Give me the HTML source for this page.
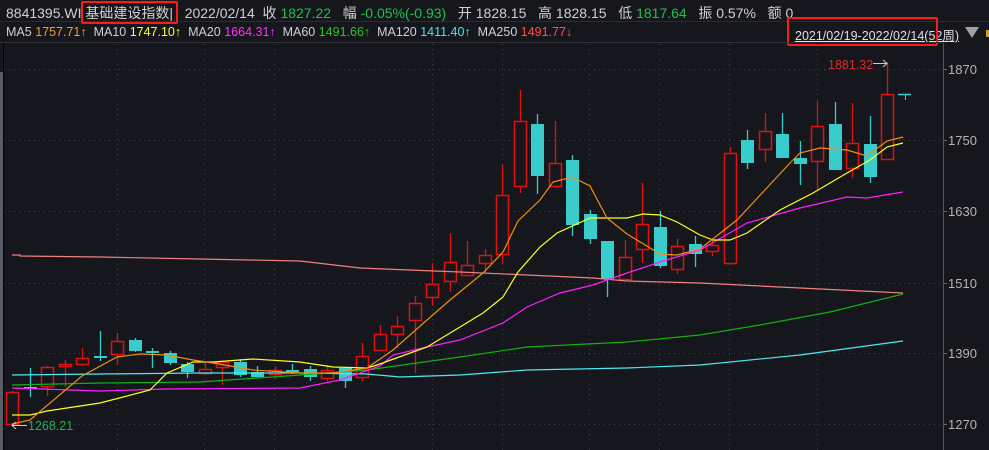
<!DOCTYPE html>
<html><head><meta charset="utf-8">
<style>
html,body{margin:0;padding:0;background:#15171c;overflow:hidden}
body{width:989px;height:450px;position:relative;font-family:"Liberation Sans","Noto Sans CJK SC",sans-serif;font-size:13px;color:#d0d0d0}
.row{position:absolute;left:6px;white-space:nowrap}
.g{color:#20c050}.o{color:#f0a030}.y{color:#ffff30}.m{color:#ff30ff}.gr{color:#30c030}.c{color:#50e0f0}.r{color:#ff5050}
.box{position:absolute;border:2px solid #ff1a1a;border-radius:2px}
</style></head><body>
<div class="row" style="top:3px;font-size:14px">8841395.WI 基础建设指数|&nbsp;&nbsp; 2022/02/14&nbsp; 收 <span class="g">1827.22</span>&nbsp;&nbsp; 幅 <span class="g">-0.05%(-0.93)</span>&nbsp;&nbsp; 开 1828.15&nbsp;&nbsp; 高 1828.15&nbsp;&nbsp; 低 <span class="g">1817.64</span>&nbsp;&nbsp; 振 0.57%&nbsp;&nbsp; 额 0</div>
<div style="position:absolute;left:0;top:21px;width:989px;height:1px;background:#2a2c32"></div>
<div class="row" style="top:25px;font-size:12.5px">MA5 <span class="o">1757.71↑</span>&nbsp; MA10 <span class="y">1747.10↑</span>&nbsp; MA20 <span class="m">1664.31↑</span>&nbsp; MA60 <span class="gr">1491.66↑</span>&nbsp; MA120 <span class="c">1411.40↑</span>&nbsp; MA250 <span class="r">1491.77↓</span></div>
<div style="position:absolute;left:795px;top:25px;font-size:12.5px;color:#e0e0e0;text-decoration:underline;white-space:nowrap">2021/02/19-2022/02/14(52周)</div>
<div style="position:absolute;left:965px;top:27px;width:0;height:0;border-left:7px solid transparent;border-right:7px solid transparent;border-top:11px solid #a0a0a0"></div>
<div style="position:absolute;left:986px;top:30px;width:3px;height:7px;background:#d0a020"></div>
<div class="box" style="left:81px;top:1px;width:93px;height:19px"></div>
<div class="box" style="left:787px;top:17px;width:147px;height:25px"></div>
<svg id="s" width="989" height="450" style="position:absolute;left:0;top:0" xmlns="http://www.w3.org/2000/svg"></svg>
<script>
var s=document.getElementById('s');var h='';
h+='<line x1="0" y1="42.5" x2="943" y2="42.5" stroke="#2e3036"/>';
h+='<rect x="0" y="72" width="3" height="378" fill="#5a5c66"/>';
h+='<line x1="3.5" y1="43" x2="3.5" y2="450" stroke="#000"/>';
var ys=[69,140,211,283,353,424],lb=[1870,1750,1630,1510,1390,1270];
ys.forEach(function(y,i){h+='<line x1="4" y1="'+(y+.5)+'" x2="943" y2="'+(y+.5)+'" stroke="#3c3e46" stroke-dasharray="1,4"/>';
h+='<line x1="943" y1="'+(y+.5)+'" x2="947" y2="'+(y+.5)+'" stroke="#666"/>';
h+='<text x="948" y="'+(y+5)+'" fill="#b4b4b8" font-size="13" font-family="Liberation Sans">'+lb[i]+'</text>';});
[117,204,274,432,502,589,659,729,817].forEach(function(x){h+='<line x1="'+(x+.5)+'" y1="44" x2="'+(x+.5)+'" y2="450" stroke="#3c3e46" stroke-dasharray="1,4"/>';});
h+='<line x1="943.5" y1="43" x2="943.5" y2="450" stroke="#55575e"/>';
var C=[[392,424,391,424,1],[387,389,368,397,0],[367,386,366,396,1],[364,366,360,387,1],[358,364,348,366,1],[356,358,331,361,0],[341,354,333,365,1],[340,351,338,352,0],[351,353,348,368,0],[353,363,351,365,0],[364,372,362,378,0],[369,373,362,375,1],[362,367,361,385,1],[362,375,359,377,0],[372,377,366,378,0],[370,374,366,379,1],[370,372,364,374,0],[369,377,366,381,0],[370,378,365,381,1],[368,381,367,388,0],[356,377,343,381,1],[334,350,325,350,1],[326,334,316,348,1],[303,320,296,373,1],[284,297,263,306,1],[262,281,233,292,1],[265,275,241,275,1],[255,263,249,272,1],[195,254,165,264,1],[121,186,90,193,1],[124,176,114,194,0],[163,186,121,188,1],[160,225,155,236,0],[214,239,210,244,0],[241,279,241,297,0],[257,279,240,279,1],[224,249,183,263,1],[227,266,211,268,0],[246,269,239,274,1],[244,254,236,267,0],[245,251,238,256,1],[153,263,147,263,1],[140,163,130,169,0],[131,149,113,162,1],[134,158,113,158,0],[158,164,141,185,0],[126,161,101,190,1],[124,170,102,170,0],[143,168,103,178,1],[144,177,116,183,0],[94,159,62,159,1]];
C.forEach(function(c,i){var x=Math.round(12+17.5*i);var col=c[4]?'#e01010':'#38cccc';
h+='<line x1="'+(x+.5)+'" y1="'+c[2]+'" x2="'+(x+.5)+'" y2="'+c[3]+'" stroke="'+col+'" stroke-width="1.3"/>';
var bh=Math.max(c[1]-c[0],2);
if(c[4])h+='<rect x="'+(x-5.5)+'" y="'+(c[0]+.5)+'" width="12" height="'+bh+'" fill="#15171c" stroke="'+col+'" stroke-width="1.5"/>';
else h+='<rect x="'+(x-6)+'" y="'+c[0]+'" width="13" height="'+bh+'" fill="'+col+'"/>';});
h+='<line x1="898" y1="94.5" x2="911" y2="94.5" stroke="#38cccc" stroke-width="1.5"/><line x1="905.5" y1="94" x2="905.5" y2="100" stroke="#38cccc"/>';
function pl(p,col,w){h+='<polyline points="'+p+'" fill="none" stroke="'+col+'" stroke-width="'+(w||1.2)+'"/>';}
pl('12,255 20,255 20,256 100,257 200,259 300,261 360,268 460,272 527,275 593,278 627,281 700,283 800,288 903,293','#f08080');
pl('12,375 100,374 200,373 300,373 367,374 400,377 460,375 527,370 627,368 700,365 800,355 903,341','#50e8f0');
pl('12,385 100,383 200,382 300,375 367,370 460,357 527,347 627,342 700,335 760,325 830,312 903,294','#10b010');
pl('12,388 100,391 167,389 300,388 340,380 380,366 393,355 427,347 460,340 503,323 527,307 560,293 593,285 627,273 660,262 700,250 747,223 800,208 847,197 867,198 903,192','#ff20ff');
pl('12,415 30,415 47,411 100,403 150,390 167,373 193,362 213,362 253,359 300,362 333,367 367,368 377,365 427,347 460,327 483,313 503,297 518,272 540,247 557,233 590,218 627,218 643,214 660,215 677,222 700,235 713,240 730,240 747,233 780,210 813,193 847,173 870,160 887,147 903,143','#ffff20');
pl('12,424 30,420 82,376 117,357 140,354 167,355 193,360 213,363 253,370 300,373 333,373 367,368 393,350 427,320 450,300 483,273 503,252 518,221 540,200 553,182 572,177 590,186 607,218 627,234 660,254 677,255 700,249 737,220 763,192 790,163 800,153 820,148 847,150 867,156 887,141 903,137','#f09010');
h+='<text x="828" y="69" fill="#e02828" font-size="12.5" font-family="Liberation Sans">1881.32</text>';
h+='<line x1="873" y1="63.5" x2="887" y2="63.5" stroke="#ccc"/><polyline points="883,60 887,63.5 883,67" fill="none" stroke="#ccc"/>';
h+='<line x1="12" y1="425.5" x2="27" y2="425.5" stroke="#ccc"/><polyline points="16,422 12,425.5 16,429" fill="none" stroke="#ccc"/>';
h+='<text x="28" y="430" fill="#20b050" font-size="12.5" font-family="Liberation Sans">1268.21</text>';
s.innerHTML=h;
</script>
</body></html>
